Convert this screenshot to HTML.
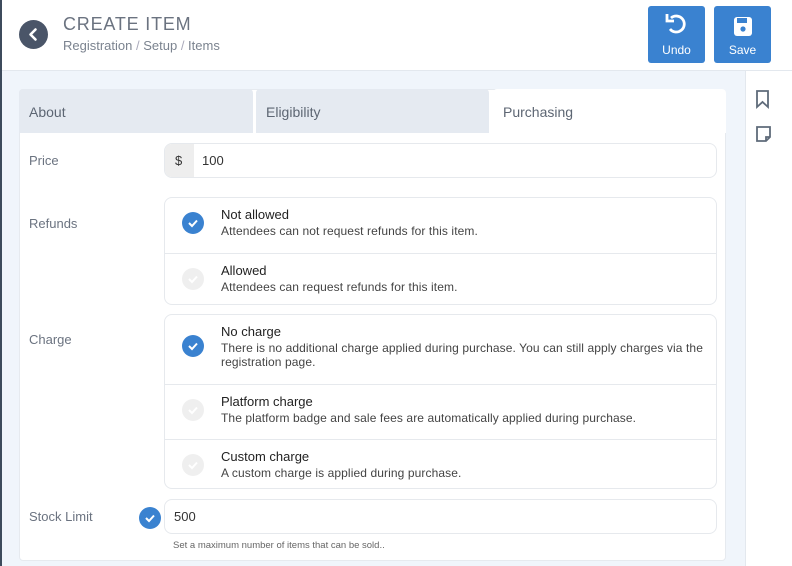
<!DOCTYPE html>
<html><head><meta charset="utf-8"><style>
*{box-sizing:border-box;margin:0;padding:0}
body{width:792px;height:566px;overflow:hidden;font-family:"Liberation Sans",sans-serif;background:#fff;position:relative;color:#333}
.lb{position:absolute;left:0;top:0;width:2px;height:566px;background:#3d4b5c}
.hdr{position:absolute;left:2px;top:0;width:790px;height:71px;background:#fff;border-bottom:1px solid #e3e8ee}
.back{position:absolute;left:19px;top:20px;width:29px;height:29px;border-radius:50%;background:#4a5568}
.title{position:absolute;left:63px;top:14px;font-size:18px;color:#6b7380;letter-spacing:0.8px}
.crumb{position:absolute;left:63px;top:38px;font-size:13px;color:#7b838f}
.btn{position:absolute;top:6px;width:57px;height:57px;background:#3a82d0;border-radius:3px;color:#fff;font-size:12px;text-align:center}
.btn span{position:absolute;left:0;right:0;top:37px}
.main{position:absolute;left:2px;top:71px;width:743px;height:495px;background:#f0f5fb}
.side{position:absolute;left:745px;top:71px;width:38px;height:495px;background:#fff;border-left:1px solid #e3e8ee}
.card{position:absolute;left:19px;top:89px;width:707px;height:472px;background:#fff;border:1px solid #e6eaef;border-radius:4px}
.tab{position:absolute;top:89px;height:44px;background:#e5eaf1;font-size:14px;color:#5d6673;padding:15px 10px;border-radius:4px 4px 0 0}
.lbl{position:absolute;left:29px;font-size:13px;color:#6b7380}
.box{position:absolute;left:164px;width:553px;border:1px solid #e6e9ed;border-radius:8px;background:#fff}
.opt{position:relative;border-top:1px solid #e6e9ed}
.opt:first-child{border-top:none}
.ck{position:absolute;left:17px;width:22px;height:22px;border-radius:50%;background:#3a82d0}
.ck.off{background:#efefef}
.ot{position:absolute;left:56px;font-size:13px;color:#222}
.od{position:absolute;left:56px;font-size:12px;color:#444;line-height:14px;letter-spacing:0.1px}
</style></head><body>
<div class="lb"></div>
<div class="hdr"></div>
<div class="back"><svg width="29" height="29"><path d="M16.5 9.5 L11.5 14.5 L16.5 19.5" stroke="#fff" stroke-width="2.6" fill="none" stroke-linecap="round" stroke-linejoin="round"/></svg></div>
<div class="title">CREATE ITEM</div>
<div class="crumb">Registration <span style="color:#aab">/</span> Setup <span style="color:#aab">/</span> Items</div>
<div class="btn" style="left:648px"><svg width="57" height="34"><path d="M23 12 A8 8 0 1 1 22 23" stroke="#fff" stroke-width="2.8" fill="none"/><path d="M19 8 L19 15 L26 15" stroke="#fff" stroke-width="2.8" fill="none"/></svg><span>Undo</span></div>
<div class="btn" style="left:714px"><svg width="57" height="34"><rect x="20" y="11" width="18" height="19" rx="3" fill="#fff"/><rect x="23" y="12" width="10" height="5" fill="#3a82d0"/><circle cx="29" cy="23" r="2.6" fill="#3a82d0"/></svg><span>Save</span></div>
<div class="main"></div>
<div class="side"><svg width="38" height="80" style="position:absolute;left:8px;top:19px"><path d="M3 1 H14 V17 L8.5 12 L3 17 Z" stroke="#5f6b7a" stroke-width="1.8" fill="none"/><path d="M3 37 H16 V47 L12 51 H3 Z M12 51 V47 H16" stroke="#5f6b7a" stroke-width="1.8" fill="none"/></svg></div>
<div class="card"></div>
<div class="tab" style="left:19px;width:234px">About</div>
<div class="tab" style="left:256px;width:233px">Eligibility</div>
<div class="tab" style="left:493px;width:233px;background:#fff">Purchasing</div>
<div class="lbl" style="top:153px">Price</div>
<div class="box" style="top:143px;height:35px;display:flex;overflow:hidden"><div style="width:29px;background:#eeeeee;font-size:13px;padding:9px 10px">$</div><div style="font-size:13px;padding:9px 8px">100</div></div>
<div class="lbl" style="top:216px">Refunds</div>
<div class="box" style="top:197px;height:108px">
<div class="opt" style="height:55px"><div class="ck" style="top:14px"><svg width="22" height="22"><path d="M7 11 L10 14 L15 8.5" stroke="#fff" stroke-width="2" fill="none"/></svg></div><div class="ot" style="top:9px">Not allowed</div><div class="od" style="top:26px">Attendees can not request refunds for this item.</div></div>
<div class="opt" style="height:51px"><div class="ck off" style="top:14px"><svg width="22" height="22"><path d="M7 11 L10 14 L15 8.5" stroke="#fff" stroke-width="2" fill="none"/></svg></div><div class="ot" style="top:9px">Allowed</div><div class="od" style="top:26px">Attendees can request refunds for this item.</div></div>
</div>
<div class="lbl" style="top:332px">Charge</div>
<div class="box" style="top:314px;height:175px">
<div class="opt" style="height:69px"><div class="ck" style="top:20px"><svg width="22" height="22"><path d="M7 11 L10 14 L15 8.5" stroke="#fff" stroke-width="2" fill="none"/></svg></div><div class="ot" style="top:9px">No charge</div><div class="od" style="top:26px;width:490px">There is no additional charge applied during purchase. You can still apply charges via the registration page.</div></div>
<div class="opt" style="height:55px"><div class="ck off" style="top:14px"><svg width="22" height="22"><path d="M7 11 L10 14 L15 8.5" stroke="#fff" stroke-width="2" fill="none"/></svg></div><div class="ot" style="top:9px">Platform charge</div><div class="od" style="top:26px">The platform badge and sale fees are automatically applied during purchase.</div></div>
<div class="opt" style="height:50px"><div class="ck off" style="top:14px"><svg width="22" height="22"><path d="M7 11 L10 14 L15 8.5" stroke="#fff" stroke-width="2" fill="none"/></svg></div><div class="ot" style="top:9px">Custom charge</div><div class="od" style="top:26px">A custom charge is applied during purchase.</div></div>
</div>
<div class="lbl" style="top:509px">Stock Limit</div>
<div class="ck" style="position:absolute;left:139px;top:507px"><svg width="22" height="22"><path d="M7 11 L10 14 L15 8.5" stroke="#fff" stroke-width="2" fill="none"/></svg></div>
<div class="box" style="top:499px;height:35px;font-size:13px;padding:9px 9px">500</div>
<div style="position:absolute;left:173px;top:540px;font-size:9.5px;color:#666">Set a maximum number of items that can be sold..</div>
</body></html>
